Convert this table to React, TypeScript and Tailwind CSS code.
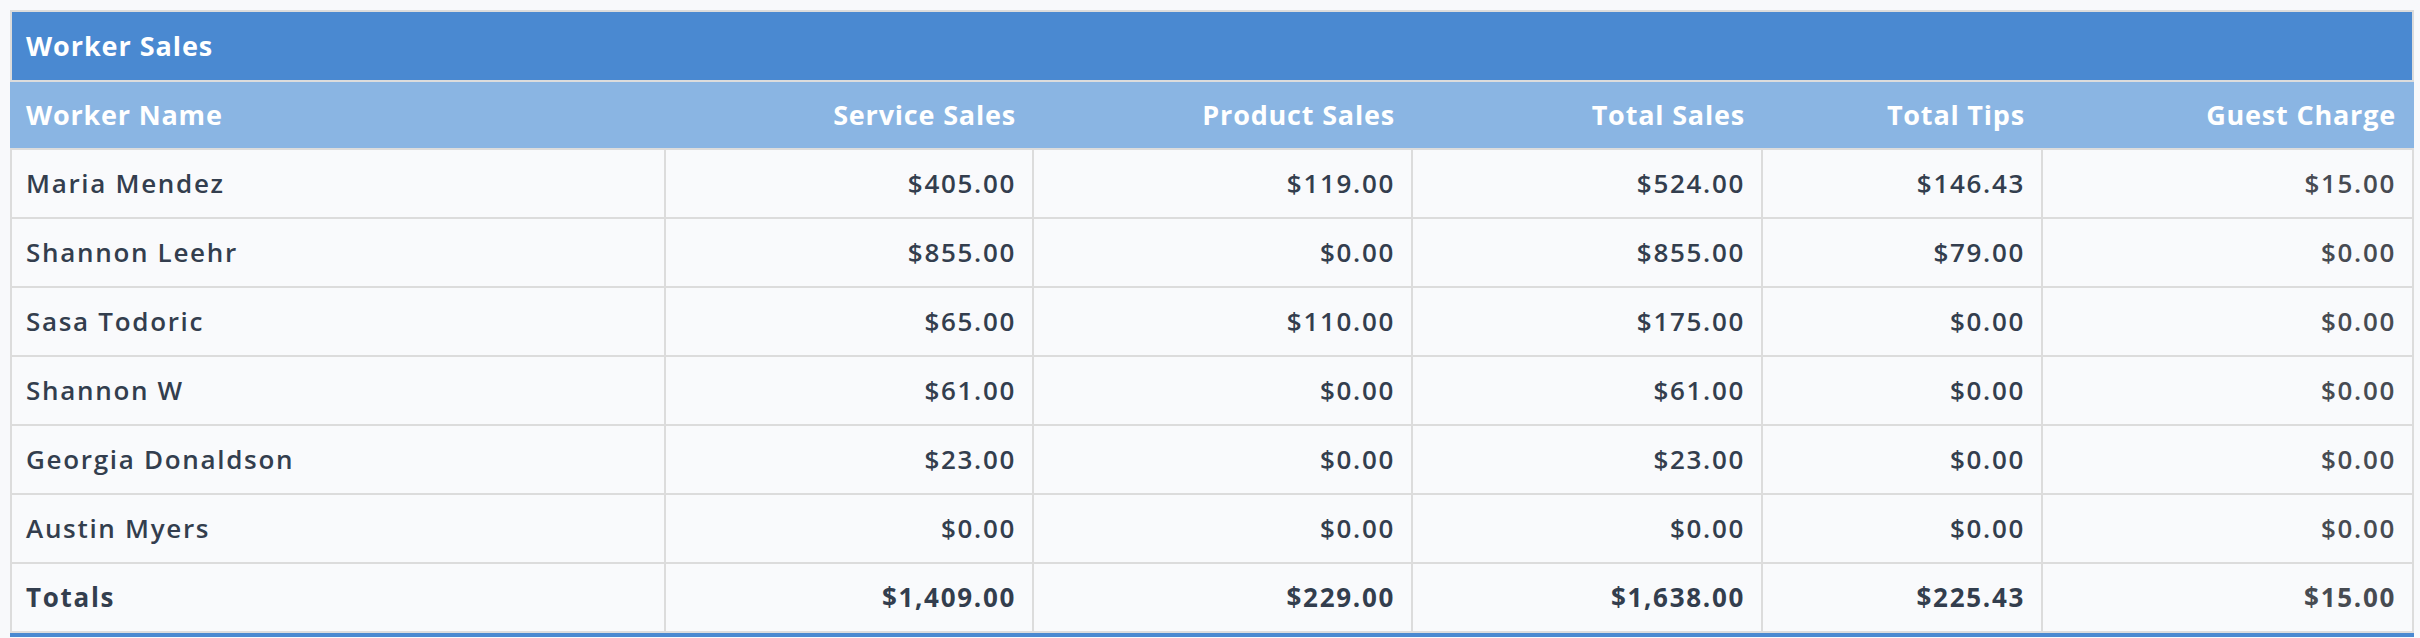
import React from "react";

type Row = {
  name: string;
  service: string;
  product: string;
  total: string;
  tips: string;
  guest: string;
};

const rows: Row[] = [
  { name: "Maria Mendez", service: "$405.00", product: "$119.00", total: "$524.00", tips: "$146.43", guest: "$15.00" },
  { name: "Shannon Leehr", service: "$855.00", product: "$0.00", total: "$855.00", tips: "$79.00", guest: "$0.00" },
  { name: "Sasa Todoric", service: "$65.00", product: "$110.00", total: "$175.00", tips: "$0.00", guest: "$0.00" },
  { name: "Shannon W", service: "$61.00", product: "$0.00", total: "$61.00", tips: "$0.00", guest: "$0.00" },
  { name: "Georgia Donaldson", service: "$23.00", product: "$0.00", total: "$23.00", tips: "$0.00", guest: "$0.00" },
  { name: "Austin Myers", service: "$0.00", product: "$0.00", total: "$0.00", tips: "$0.00", guest: "$0.00" },
];

const totals: Row = {
  name: "Totals",
  service: "$1,409.00",
  product: "$229.00",
  total: "$1,638.00",
  tips: "$225.43",
  guest: "$15.00",
};

const cols = "grid grid-cols-[654px_368px_379px_350px_280px_1fr]";

function BodyRow({ row, bold }: { row: Row; bold?: boolean }) {
  const weight = bold ? "font-bold" : "font-semibold";
  const cell = `flex items-center justify-end border-l-2 border-[#dcdcdc] pr-[16px] ${weight}`;
  return (
    <div className={`${cols} h-[69px] border-t-2 border-r-2 border-[#dcdcdc] bg-[#f9fafc]`}>
      <div className={`flex items-center border-l-2 border-[#dcdcdc] pl-[14px] ${weight}`}>{row.name}</div>
      <div className={cell}>{row.service}</div>
      <div className={cell}>{row.product}</div>
      <div className={cell}>{row.total}</div>
      <div className={cell}>{row.tips}</div>
      <div className={`${cell} text-[#474b52]`}>{row.guest}</div>
    </div>
  );
}

export default function App() {
  return (
    <div
      className="min-h-screen bg-[#f8f9fb] pl-[10px] pt-[10px] text-[26px] tracking-[0.065em] text-[#333e4e]"
      style={{ fontFamily: "'Open Sans', Lato, sans-serif" }}
    >
      <div className="w-[2404px] border-b-[4px] border-[#4a89d1]">
        <div className="flex h-[72px] items-center border-2 border-[#dcdcdc] bg-[#4a89d1] pl-[14px] text-[27px] font-bold tracking-[0.035em] text-white">
          Worker Sales
        </div>
        <div className={`${cols} h-[66px] bg-[#8ab5e3] text-[27px] font-bold tracking-[0.03em] text-white`}>
          <div className="flex items-center pl-[16px]">Worker Name</div>
          <div className="flex items-center justify-end pr-[16px]">Service Sales</div>
          <div className="flex items-center justify-end pr-[16px]">Product Sales</div>
          <div className="flex items-center justify-end pr-[16px]">Total Sales</div>
          <div className="flex items-center justify-end pr-[16px]">Total Tips</div>
          <div className="flex items-center justify-end pr-[18px]">Guest Charge</div>
        </div>
        {rows.map((r) => (
          <BodyRow key={r.name} row={r} />
        ))}
        <div className="border-b-2 border-[#dcdcdc]">
          <BodyRow row={totals} bold />
        </div>
      </div>
    </div>
  );
}
